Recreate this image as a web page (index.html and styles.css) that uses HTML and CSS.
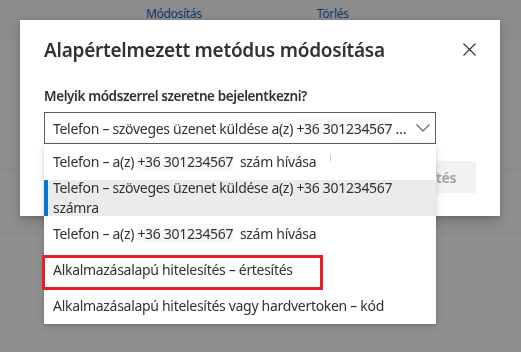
FILE: index.html
```html
<!DOCTYPE html>
<html lang="hu">
<head>
    <meta charset="UTF-8">
    <title>Alapértelmezett metódus módosítása</title>
    <link rel="stylesheet" href="styles.css">
</head>
<body>
    <div class="page">
        <div class="page-row page-head">
            <a class="page-link">Módosítás</a>
            <a class="page-link">Törlés</a>
        </div>
        <div class="page-row page-mid"></div>
        <div class="page-row page-low"></div>
    </div>

    <div class="overlay">
        <div class="dialog">
            <div class="dialog-head">
                <h2 class="dialog-title">Alapértelmezett metódus módosítása</h2>
                <button class="close-btn" aria-label="Bezárás">
                    <svg width="13" height="13" viewBox="0 0 13 13">
                        <path d="M0.5 0.5 L12.5 12.5 M12.5 0.5 L0.5 12.5" stroke="#323130" stroke-width="1.1" fill="none"/>
                    </svg>
                </button>
            </div>

            <div class="field">
                <label class="field-label">Melyik módszerrel szeretne bejelentkezni?</label>
                <div class="select">
                    <span class="select-text">Telefon – szöveges üzenet küldése a(z) <span class="phone">+36 301234567</span> …</span>
                    <svg class="chevron" width="14" height="8" viewBox="0 0 14 8">
                        <path d="M0.5 0.5 L7 7 L13.5 0.5" stroke="#605e5c" stroke-width="1.1" fill="none"/>
                    </svg>
                </div>

                <div class="dropdown">
                    <div class="option">Telefon – a(z) <span class="phone">+36 301234567</span>&nbsp; szám hívása <span class="mark"></span></div>
                    <div class="option selected"><span class="option-text">Telefon – szöveges üzenet küldése a(z) +36 301234567<br>számra</span></div>
                    <div class="option">Telefon – a(z) <span class="phone">+36 301234567</span>&nbsp; szám hívása</div>
                    <div class="option">Alkalmazásalapú hitelesítés – értesítés</div>
                    <div class="option">Alkalmazásalapú hitelesítés vagy hardvertoken – kód</div>
                    <div class="highlight-box"></div>
                </div>
            </div>

            <div class="dialog-foot">
                <button class="confirm-btn" disabled>Megerősítés</button>
            </div>
        </div>
    </div>
</body>
</html>
```

FILE: styles.css
```css
body {
    margin: 0;
    font-family: "Noto Sans", "Open Sans", sans-serif;
    color: #323130;
    background-color: #fff;
}

.page {
    height: 352px;
}

.page-row {
    border-bottom: 1px solid #f3f2f1;
}

.page-head {
    height: 38px;
    display: flex;
    align-items: flex-start;
    gap: 115px;
    padding-left: 146px;
    background-color: #fafafa;
}

.page-link {
    font-size: 12px;
    letter-spacing: -0.3px;
    line-height: 28px;
    color: #0f6cbd;
}

.page-mid {
    height: 130px;
}

.page-low {
    height: 63px;
}

.overlay {
    position: fixed;
    inset: 0;
    background-color: rgba(0, 0, 0, 0.44);
}

.dialog {
    position: absolute;
    left: 20px;
    top: 20px;
    width: 480px;
    height: 196px;
    box-sizing: border-box;
    padding: 0 24px 24px 24px;
    background-color: #fff;
    box-shadow: 0 6px 14px rgba(0,0,0,0.2), 0 1px 4px rgba(0,0,0,0.15);
}

.dialog-head {
    display: flex;
    align-items: center;
    justify-content: space-between;
    height: 56px;
    padding-top: 3px;
    box-sizing: border-box;
}

.dialog-title {
    margin: 0;
    font-size: 19px;
    letter-spacing: -0.25px;
    font-weight: 600;
    line-height: 28px;
    color: #323130;
}

.close-btn {
    border: none;
    background: none;
    padding: 0;
    width: 13px;
    height: 13px;
    display: flex;
}

.field {
    position: relative;
    margin-top: 10px;
}

.field-label {
    display: block;
    font-size: 13.5px;
    letter-spacing: -0.4px;
    font-weight: 600;
    line-height: 20px;
    margin-bottom: 6px;
}

.select {
    width: 392px;
    height: 32px;
    box-sizing: border-box;
    border: 1px solid #605e5c;
    display: flex;
    align-items: center;
    justify-content: space-between;
    padding: 0 5px 0 8px;
}

.select-text {
    font-size: 14px;
    letter-spacing: -0.3px;
    white-space: nowrap;
    overflow: hidden;
}

.chevron {
    flex-shrink: 0;
}

.phone {
    background-color: #f8f8f8;
}

.dropdown {
    position: absolute;
    left: 0;
    top: 100%;
    width: 392px;
    background-color: #fff;
    box-shadow: 0 3px 8px rgba(0,0,0,0.14), 0 1px 2px rgba(0,0,0,0.12);
    z-index: 2;
}

.option {
    height: 36px;
    box-sizing: border-box;
    padding: 0 8px 0 9px;
    font-size: 14px;
    letter-spacing: -0.3px;
    line-height: 36px;
    white-space: nowrap;
}

.option.selected {
    display: flex;
    align-items: center;
    background-color: #edebe9;
    box-shadow: inset 4px 0 0 #0078d4;
}

.option-text {
    line-height: 20px;
}

.mark {
    display: inline-block;
    width: 1px;
    height: 6px;
    margin-left: 10px;
    vertical-align: 6px;
    background-color: #c8c6c4;
}

.highlight-box {
    position: absolute;
    left: -2px;
    top: 111px;
    width: 281px;
    height: 35px;
    box-sizing: border-box;
    border: 3px solid #ee1c25;
}

.dialog-foot {
    display: flex;
    justify-content: flex-end;
    margin-top: 17px;
}

.confirm-btn {
    height: 32px;
    padding: 0 20px;
    border: none;
    background-color: #f3f2f1;
    color: #a19f9d;
    font-family: inherit;
    font-size: 14px;
    letter-spacing: -0.3px;
    font-weight: 600;
}
```
